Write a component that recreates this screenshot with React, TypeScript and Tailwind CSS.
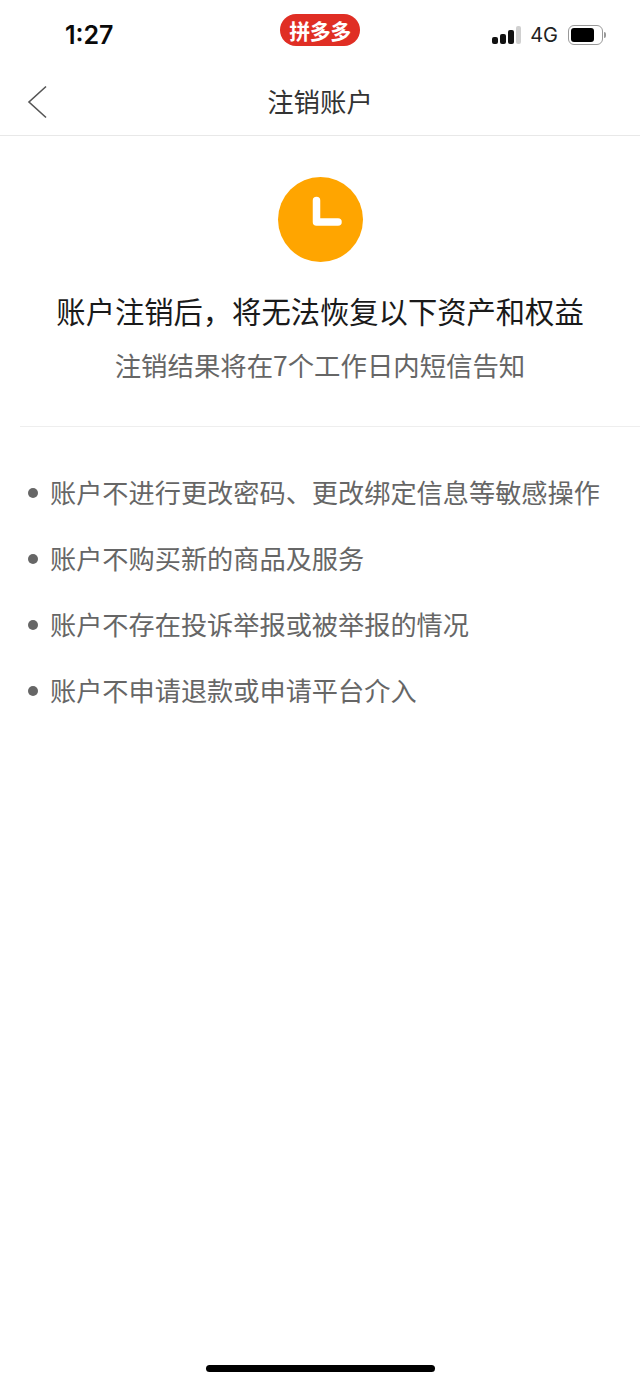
const cjk = "font-['Noto_Sans_CJK_SC','Noto_Sans',sans-serif]";

const rules = [
  '账户不进行更改密码、更改绑定信息等敏感操作',
  '账户不购买新的商品及服务',
  '账户不存在投诉举报或被举报的情况',
  '账户不申请退款或申请平台介入',
];

function StatusBar() {
  return (
    <div className="h-[70px] grid grid-cols-[1fr_80px_1fr] items-start pt-[14px]">
      <span className="pl-[65px] mt-[5px] text-[25px] leading-[32px] font-semibold text-[#0a0a0a] font-['Inter',sans-serif]">1:27</span>
      <div className="h-[32px] rounded-full bg-[#e02e24] flex items-center justify-center">
        <span className={`${cjk} text-[21px] leading-none font-bold text-white tracking-[-0.5px]`}>拼多多</span>
      </div>
      <div className="mt-[12px] pr-[34px] flex items-center justify-end h-[18px]">
        <div className="flex items-end gap-[2px] h-[18px]">
          <div className="w-[6px] h-[7px] rounded-[2px] bg-[#111]" />
          <div className="w-[6px] h-[10px] rounded-[2px] bg-[#111]" />
          <div className="w-[6px] h-[14px] rounded-[2px] bg-[#111]" />
          <div className="w-[5px] h-[18px] rounded-[2px] bg-[#d0d0d0]" />
        </div>
        <span className="ml-[9px] text-[20px] leading-none text-[#222] font-['Inter',sans-serif]">4G</span>
        <div className="ml-[10px] w-[35px] h-[20px] rounded-[6px] border border-[#999] p-[2px]">
          <div className="w-[23px] h-full rounded-[3px] bg-black" />
        </div>
        <div className="ml-[1px] w-[2px] h-[6px] rounded-r-full bg-[#999]" />
      </div>
    </div>
  );
}

function NavBar() {
  return (
    <div className="relative h-[66px] flex items-center justify-center border-b border-[#e8e8e8]">
      <svg className="absolute left-[26px] top-[15px]" width="22" height="34" viewBox="0 0 22 34" fill="none">
        <path d="M20 1.5 L3 17 L20 32.5" stroke="#555" strokeWidth="1.6" />
      </svg>
      <span className={`${cjk} text-[26.4px] leading-none text-[#333] mb-[3px]`}>注销账户</span>
    </div>
  );
}

export default function App() {
  return (
    <div className="w-[640px] h-[1385px] bg-white flex flex-col overflow-hidden">
      <StatusBar />
      <NavBar />

      <div className="flex flex-col items-center pt-[41px]">
        <div className="w-[85px] h-[85px] rounded-full bg-[#ffa500] flex items-center justify-center">
          <svg width="50" height="50" viewBox="0 0 50 50" fill="none">
            <path d="M21.5 5.5 V27 H43" stroke="white" strokeWidth="7.5" strokeLinecap="round" strokeLinejoin="round" />
          </svg>
        </div>
        <h1 className={`${cjk} mt-[28px] text-[29.3px] leading-[40px] font-normal text-[#1a1a1a] whitespace-nowrap`}>{'账户注销后\uFF0C将无法恢复以下资产和权益'}</h1>
        <p className={`${cjk} mt-[15px] text-[26.4px] leading-[40px] text-[#666]`}>注销结果将在7个工作日内短信告知</p>
      </div>

      <div className="ml-[20px] mt-[41px] border-t border-[#eeeeee]" />

      <ul className="pt-[46px] pl-[28px] flex flex-col gap-[26px]">
        {rules.map(rule => (
          <li key={rule} className="flex items-center h-[40px]">
            <span className="w-[10px] h-[10px] rounded-full bg-[#666]" />
            <span className={`${cjk} ml-[12px] mb-[2px] text-[26.2px] leading-[40px] text-[#666] whitespace-nowrap`}>{rule}</span>
          </li>
        ))}
      </ul>

      <div className="mt-auto mb-[13px] mx-auto w-[229px] h-[7px] rounded-full bg-black" />
    </div>
  );
}
